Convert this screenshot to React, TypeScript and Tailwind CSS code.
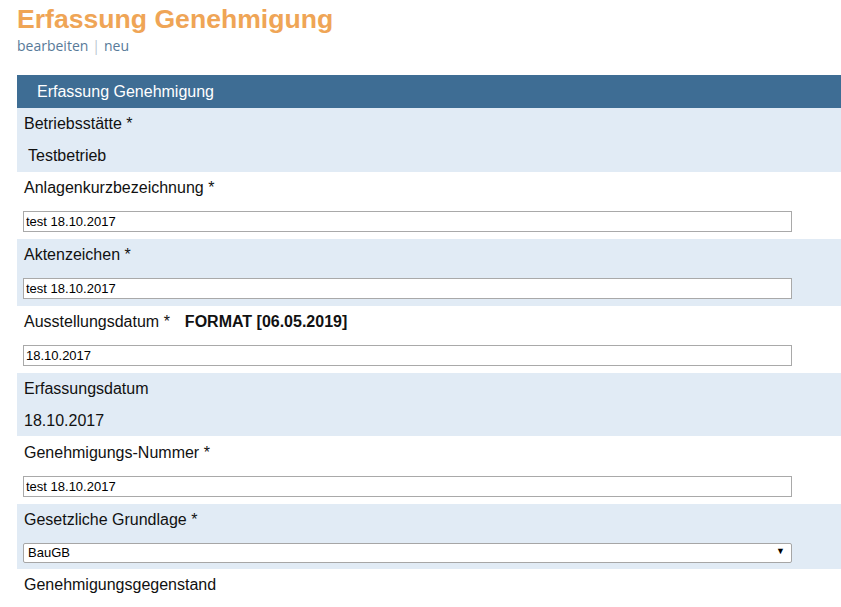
import React from "react";

type Field =
  | { kind: "text"; label: string; value: string; extra?: string; pb?: string }
  | { kind: "static"; label: string; value: string; indent?: boolean; pb?: string }
  | { kind: "select"; label: string; value: string; pb?: string }
  | { kind: "label"; label: string; pb?: string };

const fields: Field[] = [
  { kind: "static", label: "Betriebsstätte *", value: "Testbetrieb", indent: true, pb: "pb-[6px]" },
  { kind: "text", label: "Anlagenkurzbezeichnung *", value: "test 18.10.2017" },
  { kind: "text", label: "Aktenzeichen *", value: "test 18.10.2017" },
  { kind: "text", label: "Ausstellungsdatum *", value: "18.10.2017", extra: "FORMAT [06.05.2019]" },
  { kind: "static", label: "Erfassungsdatum", value: "18.10.2017", pb: "pb-[5px]" },
  { kind: "text", label: "Genehmigungs-Nummer *", value: "test 18.10.2017", pb: "pb-[7px] pt-[7px]" },
  { kind: "select", label: "Gesetzliche Grundlage *", value: "BauGB", pb: "pb-[6px]" },
  { kind: "label", label: "Genehmigungsgegenstand" },
];

function Row({ f, shaded }: { f: Field; shaded: boolean }) {
  return (
    <div className={`${shaded ? "bg-[#e1ebf5]" : "bg-white"} pl-[6px] pt-[6px] ${f.pb ?? "pb-[7px]"}`}>
      <div className="h-5 leading-5 text-[16px] text-[#111] flex items-center">
        <span className="pl-px">{f.label}</span>
        {f.kind === "text" && f.extra && <span className="ml-[15px] font-bold">{f.extra}</span>}
      </div>
      {f.kind === "text" && (
        <input
          className="mt-[13px] block w-[769px] h-[21px] border border-[#a9a9a9] bg-white px-[2px] text-[13px] text-black outline-none"
          defaultValue={f.value}
        />
      )}
      {f.kind === "static" && (
        <div className={`mt-3 h-5 leading-5 text-[16px] text-[#111] ${f.indent ? "pl-[5px]" : "pl-px"}`}>{f.value}</div>
      )}
      {f.kind === "select" && (
        <div className="relative mt-[13px] w-[769px]">
          <select
            className="block w-full h-[20px] appearance-none rounded-[2px] border border-[#a6a6a6] bg-white pl-[4px] text-[13px] leading-[18px] text-black outline-none"
            defaultValue={f.value}
          >
            <option>BauGB</option>
            <option>BImSchG</option>
            <option>WHG</option>
          </select>
          <span className="pointer-events-none absolute right-[7px] top-[4px] text-[9px] leading-none text-black">▼</span>
        </div>
      )}
    </div>
  );
}

export default function App() {
  return (
    <div className="min-h-screen bg-white pl-[17px] overflow-hidden font-['Liberation_Sans',Arial,sans-serif]">
      <h1 className="pt-[4px] text-[26.6px] leading-[30px] font-bold text-[#efa556]">Erfassung Genehmigung</h1>
      <div className="mt-[2px] h-5 leading-5 text-[14px] text-[#587a99] font-['Open_Sans','Liberation_Sans',sans-serif]">
        <a href="#" className="hover:underline">bearbeiten</a>
        <span className="mx-[4px] text-[#b8c4cf]">|</span>
        <a href="#" className="hover:underline">neu</a>
      </div>

      <div className="mt-[19px] w-[900px]">
        <div className="h-[33px] bg-[#3e6d94] pl-5 flex items-center text-[16px] text-white">Erfassung Genehmigung</div>
        {fields.map((f, i) => (
          <Row key={f.label} f={f} shaded={i % 2 === 0} />
        ))}
      </div>
    </div>
  );
}
